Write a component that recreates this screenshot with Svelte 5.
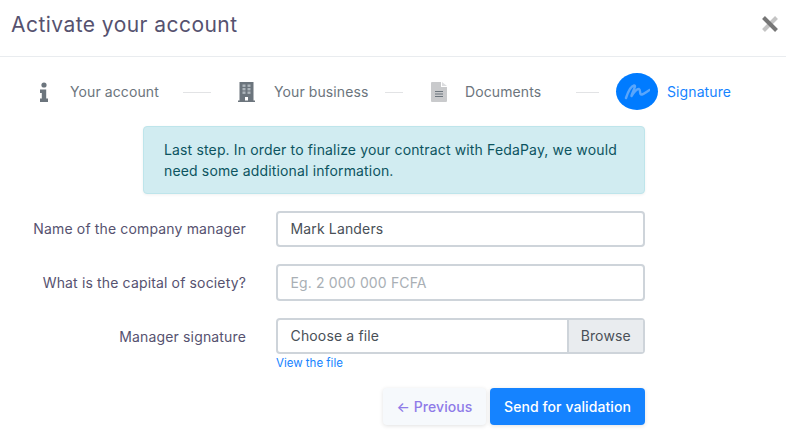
<script>
  const steps = [
    { label: 'Your account', icon: 'info', slot: 31, gap: 24, line: 28, width: 199 },
    { label: 'Your business', icon: 'building', slot: 36, gap: 17, line: 18, width: 193 },
    { label: 'Documents', icon: 'doc', slot: 34, gap: 35, line: 23, width: 185 }
  ];
</script>

<div class="modal">
  <header class="head">
    <h1>Activate your account</h1>
    <button class="close" aria-label="Close">
      <svg width="18" height="18" viewBox="0 0 18 18">
        <path d="M15.500 2.500 2.500 15.500" stroke="#c4c4c4" stroke-width="4" />
        <path d="M2.500 2.500 15.500 15.500" stroke="#767676" stroke-width="4" />
      </svg>
    </button>
  </header>

  <nav class="steps">
    {#each steps as step}
      <div class="step" style="width: {step.width}px">
        <span class="icon" style="width: {step.slot}px">
          {#if step.icon === 'info'}
            <svg width="10" height="20" viewBox="0 0 10 20">
              <circle cx="5" cy="3" r="2.600" fill="#6c757d" />
              <path d="M1 7.500h6.200v9H9V20H1v-3.500h1.800v-5.500H1z" fill="#6c757d" />
            </svg>
          {:else if step.icon === 'building'}
            <svg width="17" height="20" viewBox="0 0 17 20">
              <rect x="1.500" y="0" width="14" height="19" fill="#6c757d" />
              <rect x="0" y="18.500" width="17" height="1.500" fill="#6c757d" />
              {#each [2.500, 6, 9.500] as y}
                <rect x="4.500" {y} width="3" height="2.400" fill="#aeb6bc" />
                <rect x="9.500" {y} width="3" height="2.400" fill="#aeb6bc" />
              {/each}
              <rect x="7" y="15" width="3" height="3.500" fill="#fff" />
            </svg>
          {:else}
            <svg width="16" height="20" viewBox="0 0 16 20">
              <path fill="#c9cacc" d="M0 1a1 1 0 0 1 1-1h9v5h6v14a1 1 0 0 1-1 1H1a1 1 0 0 1-1-1z" />
              <path fill="#dcdddf" d="M11 0l5 4h-5z" />
              <path stroke="#6c757d" stroke-width="1.100" d="M4 9.500h8M4 12h8M4 14.500h8" />
            </svg>
          {/if}
        </span>
        <span class="step-label">{step.label}</span>
        <span class="line" style="margin-left: {step.gap}px; width: {step.line}px"></span>
      </div>
    {/each}
    <div class="step active">
      <span class="badge">
        <svg width="26" height="18" viewBox="0 0 26 18">
          <path d="M2 15C4 9 7 3 10 2.500 13 2 8 9 7.500 13 10 9 13 5.500 15 6 17 7 15 12 18 11.500 20 11 23 8.500 25.500 7" fill="none" stroke="#5aa6fb" stroke-width="2.400" stroke-linecap="round" stroke-linejoin="round" />
        </svg>
      </span>
      <span class="step-label">Signature</span>
    </div>
  </nav>

  <div class="body">
    <div class="alert">
      Last step. In order to finalize your contract with FedaPay, we would need some additional information.
    </div>

    <div class="field">
      <label for="manager">Name of the company manager</label>
      <input id="manager" value="Mark Landers" />
    </div>
    <div class="field">
      <label for="capital">What is the capital of society?</label>
      <input id="capital" placeholder="Eg. 2 000 000 FCFA" />
    </div>
    <div class="field">
      <span class="label">Manager signature</span>
      <div class="file">
        <span class="file-name">Choose a file</span>
        <span class="browse">Browse</span>
      </div>
    </div>
    <a class="view" href="#view">View the file</a>

    <div class="actions">
      <button class="prev"><span class="arrow">←</span> Previous</button>
      <button class="send">Send for validation</button>
    </div>
  </div>
</div>

<style>
  :global(body) {
    background: #fff;
  }

  .modal {
    width: 786px;
    height: 433px;
    overflow: hidden;
    font-family: Inter, "Noto Sans", sans-serif;
    font-size: 14px;
    letter-spacing: 0.15px;
    color: #525f7f;
  }

  .head {
    display: flex;
    justify-content: space-between;
    align-items: center;
    height: 57px;
    padding: 0 7px 8px 11px;
    box-sizing: border-box;
    border-bottom: 1px solid #e9ecef;
  }

  h1 {
    margin: 0;
    font-size: 21px;
    font-weight: 400;
    letter-spacing: 0.45px;
    color: #56526f;
  }

  .close {
    border: 0;
    background: none;
    padding: 0;
    display: flex;
  }

  .steps {
    display: flex;
    align-items: center;
    height: 69px;
    padding-left: 39px;
  }

  .step {
    display: flex;
    align-items: center;
    color: #6c757d;
  }

  .icon {
    display: flex;
  }

  .step-label {
    white-space: nowrap;
    letter-spacing: 0.1px;
  }

  .line {
    height: 1px;
    background: #e2e3e5;
    margin-top: 2px;
  }

  .active {
    color: #1583ff;
  }

  .badge {
    width: 42px;
    height: 37px;
    border-radius: 50%;
    background: #007bff;
    display: flex;
    align-items: center;
    justify-content: center;
    margin-right: 9px;
  }

  .body {
    display: flex;
    flex-direction: column;
  }

  .alert {
    width: 502px;
    height: 67.600px;
    box-sizing: border-box;
    margin-left: 143px;
    padding: 12px 20px;
    background: #d1ecf1;
    border: 1px solid #bee5eb;
    border-radius: 4px;
    color: #0c5460;
    line-height: 21px;
    box-shadow: 0 1px 3px rgba(0, 0, 0, 0.06);
  }

  .field {
    display: flex;
    align-items: center;
    margin-top: 17px;
    height: 36.600px;
  }

  label,
  .label {
    width: 246px;
    margin-right: 30px;
    text-align: right;
    color: #56526f;
  }

  input {
    width: 369px;
    height: 100%;
    box-sizing: border-box;
    border: 2px solid #ced4da;
    border-radius: 4px;
    padding: 0 12.500px;
    font: inherit;
    letter-spacing: inherit;
    color: #495057;
    outline: none;
  }

  input::placeholder {
    color: #a9afb5;
    opacity: 1;
  }

  .file {
    width: 369px;
    height: 100%;
    box-sizing: border-box;
    border: 2px solid #ced4da;
    border-radius: 4px;
    display: flex;
    align-items: stretch;
    color: #495057;
  }

  .file-name {
    flex: 1;
    padding: 0 12.500px;
    line-height: 32px;
  }

  .browse {
    width: 74.500px;
    text-align: center;
    line-height: 32px;
    background: #e9ecef;
    border-left: 2px solid #ced4da;
  }

  .view {
    margin: 1px 0 0 276px;
    font-size: 11.500px;
    line-height: 16px;
    letter-spacing: 0;
    color: #1583ff;
    text-decoration: none;
  }

  .actions {
    display: flex;
    justify-content: flex-end;
    gap: 4px;
    width: 645px;
    margin-top: 17px;
  }

  button.prev,
  button.send {
    height: 37px;
    border: 0;
    border-radius: 4px;
    font: inherit;
    letter-spacing: 0.08px;
    font-weight: 500;
    box-shadow: 0 1px 4px rgba(0, 0, 0, 0.12);
  }

  .prev {
    width: 103px;
    background: #f6f9fc;
    color: #8f7be8;
  }

  .arrow {
    color: #8f7be8;
  }

  .send {
    width: 155px;
    background: #1583ff;
    color: #fff;
  }
</style>
